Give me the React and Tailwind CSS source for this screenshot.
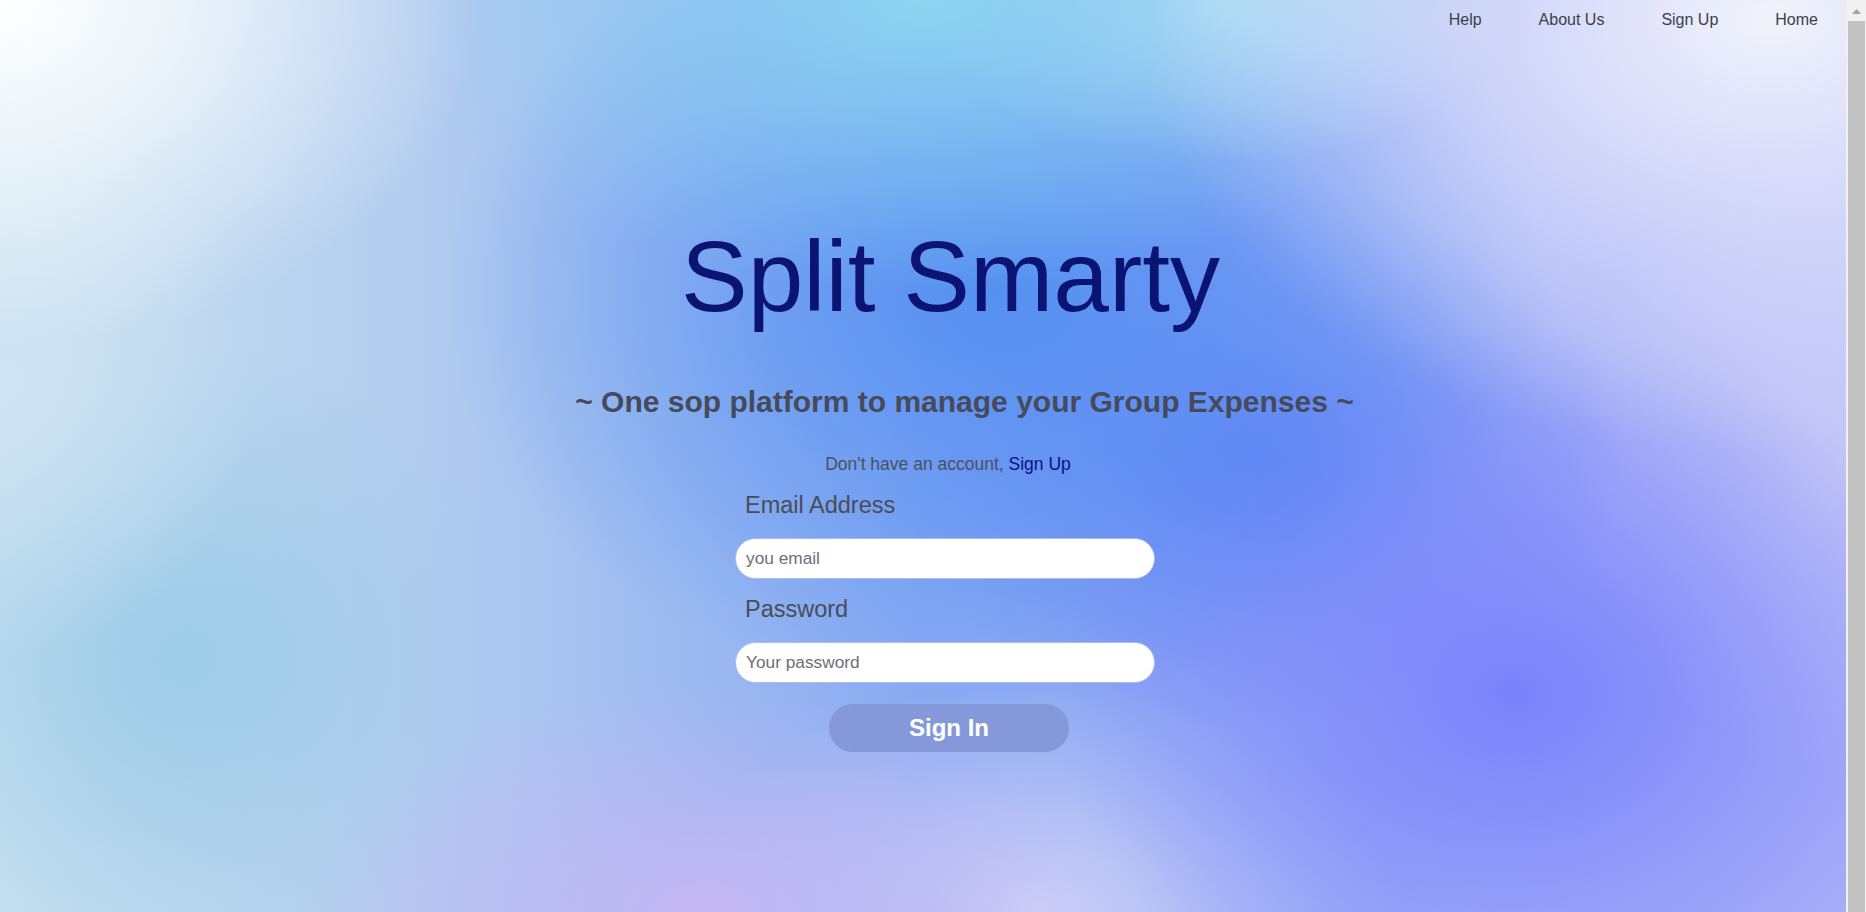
import React from "react";

const navLinks = ["Help", "About Us", "Sign Up", "Home"];

// soft mesh background: layered radial blobs over a base sweep
const meshBg =
  "[background-image:radial-gradient(26%_38%_at_0%_0%,#ffffff_0%,#ffffffaa_40%,#ffffff00_100%),radial-gradient(34%_48%_at_96%_2%,#f1f3fb_0%,#f1f3fb00_100%),radial-gradient(14%_30%_at_0%_42%,#cfe3f2_0%,#cfe3f200_100%),radial-gradient(28%_32%_at_50%_0%,#8cd4f0_0%,#8cd4f000_100%),radial-gradient(16%_18%_at_66%_0%,#b8dcf5_0%,#b8dcf500_100%),radial-gradient(30%_45%_at_54%_32%,#5590f2_0%,#5590f200_100%),radial-gradient(25%_40%_at_82%_76%,#7a82fb_0%,#7a82fb00_100%),radial-gradient(20%_30%_at_68%_50%,#6483f5_0%,#6483f500_100%),radial-gradient(18%_35%_at_10%_72%,#9ccbe8_0%,#9ccbe800_100%),radial-gradient(22%_25%_at_38%_100%,#c4b6f3_0%,#c4b6f300_100%),radial-gradient(20%_25%_at_56%_100%,#cdd0f7_0%,#cdd0f700_100%),radial-gradient(15%_35%_at_100%_50%,#c4c6f6_0%,#c4c6f600_100%),linear-gradient(90deg,#c6e0ef_0%,#b4cdef_22%,#88aaf2_50%,#92aaf4_65%,#a4b0f6_80%,#aab0f8_100%)]";

function NavBar() {
  return (
    <nav className="flex justify-end gap-[57px] pt-[10px] pr-[28px]">
      {navLinks.map((label) => (
        <a key={label} href="#" className="text-[16px] leading-[19px] text-[#3d3f4c]">
          {label}
        </a>
      ))}
    </nav>
  );
}

function SignInForm() {
  return (
    <form className="flex w-[420px] flex-col" onSubmit={(e) => e.preventDefault()}>
      <label className="pl-[10px] text-[23.5px] leading-none text-[#4a4c58]">Email Address</label>
      <input
        type="email"
        placeholder="you email"
        className="mt-[20.5px] h-[41px] w-full rounded-full border border-[#aebbec] bg-white px-[10px] text-[17.3px] text-[#333] outline-none placeholder:text-[#6f6f72]"
      />
      <label className="mt-[19px] pl-[10px] text-[23.5px] leading-none text-[#4a4c58]">Password</label>
      <input
        type="password"
        placeholder="Your password"
        className="mt-[20.5px] h-[41px] w-full rounded-full border border-[#aebbec] bg-white px-[10px] text-[17.3px] text-[#333] outline-none placeholder:text-[#6f6f72]"
      />
      <div className="mt-[21px] flex justify-center pl-[8px]">
        <button
          type="submit"
          className="h-[48px] w-[240px] rounded-full bg-[#8599da] text-[24px] font-bold leading-none text-white"
        >
          Sign In
        </button>
      </div>
    </form>
  );
}

export default function App() {
  return (
    <div className="flex h-screen w-full overflow-hidden font-['Liberation_Sans',Arial,sans-serif]">
      <main className={`flex min-w-0 flex-1 flex-col ${meshBg}`}>
        <NavBar />
        <section className="flex flex-col items-center pl-[50px]">
          <h1 className="mt-[197px] pl-[5px] text-[100px] leading-none font-normal text-[#0b1373]">Split Smarty</h1>
          <h2 className="mt-[61px] pl-[33px] text-[30px] leading-none font-bold text-[#464a5a]">
            ~ One sop platform to manage your Group Expenses ~
          </h2>
          <p className="mt-[39px] text-[17.5px] leading-none text-[#4d505e]">
            Don't have an account,{" "}
            <a href="#" className="text-[#0a1180]">
              Sign Up
            </a>
          </p>
          <div className="mt-[20.5px] mr-[6px]">
            <SignInForm />
          </div>
        </section>
      </main>
      <aside className="flex w-[20px] flex-col bg-[#f1f1f1]">
        <div className="flex h-[21px] items-start justify-center pt-[9px]">
          <svg width="9" height="5" viewBox="0 0 9 5">
            <polygon points="4.5,0 9,5 0,5" fill="#a3a3a3" />
          </svg>
        </div>
        <div className="ml-[2px] w-[17px] flex-1 bg-[#c1c1c1]" />
      </aside>
    </div>
  );
}
